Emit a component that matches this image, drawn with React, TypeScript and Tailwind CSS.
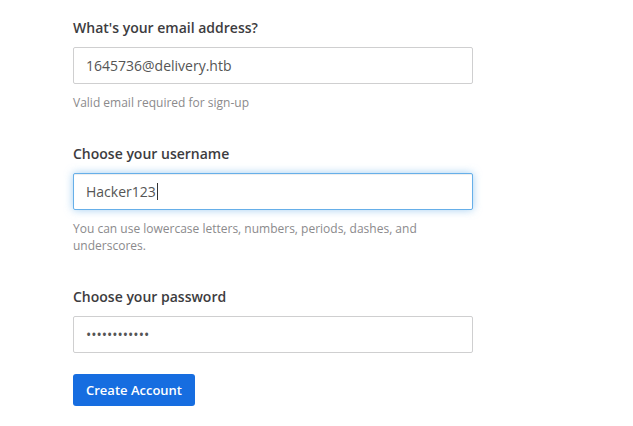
import React from "react";

const font = { fontFamily: '"Open Sans", "Noto Sans", sans-serif' };

function Field({
  label,
  children,
  help,
  focused,
}: {
  label: string;
  children: React.ReactNode;
  help?: React.ReactNode;
  focused?: boolean;
}) {
  return (
    <div className="mb-[33px]">
      <div className="text-[14px] leading-[20px] font-semibold text-[#3d3c40] mb-[9px]">{label}</div>
      <div
        className={
          "w-[400px] h-[37px] rounded-[2px] border bg-white px-[12px] flex items-center text-[14px] text-[#555555] " +
          (focused
            ? "border-[#66afe9] shadow-[inset_0_1px_1px_rgba(0,0,0,0.075),0_0_8px_rgba(102,175,233,0.6)]"
            : "border-[#cfcfd0]")
        }
      >
        {children}
      </div>
      {help && <div className="mt-[10px] w-[400px] text-[12px] leading-[17px] text-[#8b8a8c]">{help}</div>}
    </div>
  );
}

export default function App() {
  return (
    <div className="w-[633px] h-[426px] bg-white overflow-hidden" style={font}>
      <div className="pl-[73px] pt-[18px]">
        <Field label="What's your email address?" help="Valid email required for sign-up">
          <span>1645736@delivery.htb</span>
        </Field>
        <Field
          label="Choose your username"
          focused
          help="You can use lowercase letters, numbers, periods, dashes, and underscores."
        >
          <span>Hacker123</span>
          <span className="inline-block w-px h-[17px] bg-[#333333] ml-[1px]" />
        </Field>
        <div className="mb-[21px]">
          <div className="text-[14px] leading-[20px] font-semibold text-[#3d3c40] mb-[9px]">Choose your password</div>
          <div className="w-[400px] h-[37px] rounded-[2px] border border-[#cfcfd0] bg-white px-[12px] flex items-center text-[14px] text-[#555555]">
            <span>••••••••••••</span>
          </div>
        </div>
        <button className="h-[32px] w-[122px] rounded-[3px] bg-[#166de0] text-white text-[13px] font-semibold leading-none">
          Create Account
        </button>
      </div>
    </div>
  );
}
